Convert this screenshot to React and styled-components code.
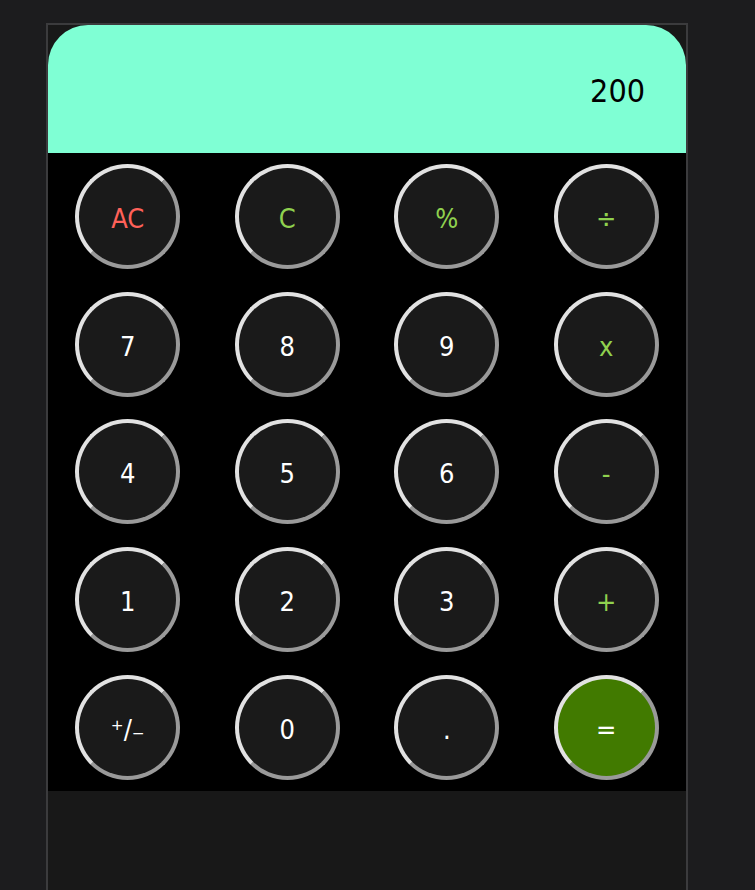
import React from "react";
import styled, { createGlobalStyle } from "styled-components";

const Global = createGlobalStyle`
  html, body { margin: 0; padding: 0; overflow: hidden; }
  body {
    background: #1c1c1e;
    font-family: "DejaVu Sans Condensed", "DejaVu Sans", "Noto Sans", sans-serif;
  }
`;

const Frame = styled.div`
  box-sizing: border-box;
  width: 642px;
  height: 900px;
  margin: 23px 0 0 46px;
  border: 2px solid #3b3b3d;
  border-bottom: none;
  background: #181818;
  display: flex;
  flex-direction: column;
`;

const Display = styled.div`
  box-sizing: border-box;
  height: 128px;
  background: #7fffd4;
  border-radius: 40px 40px 0 0;
  display: flex;
  align-items: center;
  justify-content: flex-end;
  padding: 4px 41px 0 0;
  font-size: 32px;
  color: #000;
`;

const Keypad = styled.div`
  height: 638px;
  background: #000;
  display: grid;
  grid-template-columns: repeat(4, 1fr);
  grid-template-rows: repeat(5, 1fr);
  align-items: center;
  justify-items: center;
`;

const colors = {
  num: "#ffffff",
  clear: "#ff6159",
  op: "#8fd14f",
};

const Key = styled.button`
  box-sizing: border-box;
  width: 105px;
  height: 105px;
  border-radius: 50%;
  border: 4px solid;
  border-color: #e2e2e2 #9a9a9a #9a9a9a #e2e2e2;
  background: ${(p) => (p.$equal ? "#417a00" : "#1a1a1a")};
  color: ${(p) => colors[p.$kind] || "#fff"};
  font-family: inherit;
  font-size: 27px;
  padding: 4px 0 0;
  display: flex;
  align-items: center;
  justify-content: center;
  cursor: pointer;
`;

const keys = [
  ["AC", "clear"], ["C", "op"], ["%", "op"], ["÷", "op"],
  ["7", "num"], ["8", "num"], ["9", "num"], ["x", "op"],
  ["4", "num"], ["5", "num"], ["6", "num"], ["-", "op"],
  ["1", "num"], ["2", "num"], ["3", "num"], ["+", "op"],
  ["⁺/₋", "num"], ["0", "num"], [".", "num"], ["=", "num", true],
];

export default function App() {
  return (
    <>
      <Global />
      <Frame>
        <Display>200</Display>
        <Keypad>
          {keys.map(([label, kind, eq]) => (
            <Key key={label} $kind={kind} $equal={eq}>
              {label}
            </Key>
          ))}
        </Keypad>
      </Frame>
    </>
  );
}
